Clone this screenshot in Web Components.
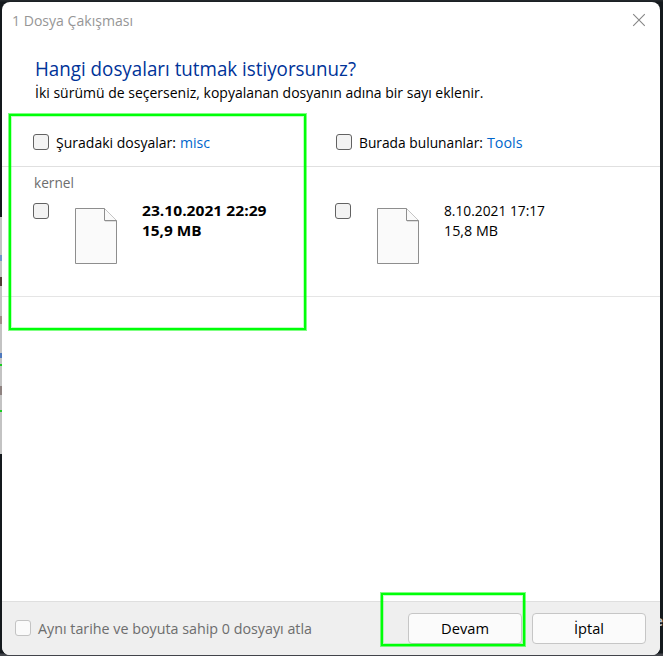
<!DOCTYPE html>
<html lang="tr">
<head>
<meta charset="utf-8">
<title>1 Dosya Çakışması</title>
<style>
html,body{margin:0;height:656px;overflow:hidden;background:#14191d}
body{font:14.8px/20px "Open Sans","Noto Sans",sans-serif;color:#000}
</style>
</head>
<body>
<conflict-dialog></conflict-dialog>
<script>
// One line of text, condensed or widened to a given width and raised by one pixel.
class FitText extends HTMLElement{
  constructor(){super();this.attachShadow({mode:'open'}).innerHTML=`<style>
:host{display:block;white-space:nowrap;flex:none}
span{display:inline-block;transform-origin:0 50%}</style><span><slot></slot></span>`}
  connectedCallback(){
    const w=+this.getAttribute('w'),s=this.shadowRoot.querySelector('span');
    this.style.width=w+'px';
    const n=s.getBoundingClientRect().width;
    if(n)s.style.transform='translateY(-1px) scaleX('+w/n+')';
  }
}
class CheckBox extends HTMLElement{
  constructor(){super();this.attachShadow({mode:'open'}).innerHTML=`<style>
:host{display:block;flex:none;box-sizing:border-box;width:16px;height:16px;border:1px solid #626262;border-radius:3px;background:#f3f3f3}
:host([disabled]){border-color:#c3c3c3;background:#fafafa}</style>`}
}
class FileIcon extends HTMLElement{
  constructor(){super();this.attachShadow({mode:'open'}).innerHTML=`<style>
:host{display:block;flex:none;width:42px;height:56px}svg{display:block}</style>
<svg width="42" height="56" fill="#fafafa" stroke="#8e8e8e"><path d="M.5.5H29.5L41.5 12.5V55.5H.5Z"/><path d="M29.5.5V12.5H41.5"/><path d="M30 13.5H41" stroke="#ddd"/></svg>`}
}
class FileVersion extends HTMLElement{
  constructor(){super();this.attachShadow({mode:'open'}).innerHTML=`<style>
:host{display:flex;align-items:flex-start}
file-icon{margin:5px 25px 0 26px}.info{margin-top:-2px}</style>
<check-box></check-box><file-icon></file-icon><div class="info"><slot></slot></div>`}
}
class PushButton extends HTMLElement{
  constructor(){super();this.attachShadow({mode:'open'}).innerHTML=`<style>
:host{display:flex;box-sizing:border-box;width:114px;height:31px;align-items:center;justify-content:center;border:1px solid #c6c6c6;border-radius:4px;background:#fbfbfb}</style><slot></slot>`}
}
// Bright outline drawn over the dialog around a region.
class HighlightBox extends HTMLElement{
  constructor(){super();this.attachShadow({mode:'open'}).innerHTML=`<style>
:host{position:absolute;box-sizing:border-box;border:2px solid #00ff08;box-shadow:0 0 0 1px #00ff0880,inset 0 0 0 1px #00ff0840;pointer-events:none}</style>`}
}
class ConflictDialog extends HTMLElement{
  constructor(){super();this.attachShadow({mode:'open'}).innerHTML=`<style>
:host{display:block;position:relative;width:663px;height:656px;overflow:hidden;background:linear-gradient(#22272b 0 1px,#14191d 2px 653px,#42444a 654px)}
.behind{position:absolute;left:0;top:217px;width:2px;height:237px;background:
 linear-gradient(#6f94cc,#6f94cc) 0 38px/2px 6px no-repeat,
 linear-gradient(#513d35,#513d35) 0 60px/2px 9px no-repeat,
 linear-gradient(#a08c88,#a08c88) 0 99px/2px 8px no-repeat,
 linear-gradient(#4e79bd,#4e79bd) 0 136px/2px 5px no-repeat,
 linear-gradient(#19cf22,#19cf22) 0 147px/2px 2px no-repeat,
 linear-gradient(#8e8280,#8e8280) 0 169px/2px 9px no-repeat,
 linear-gradient(#19cf22,#19cf22) 0 193px/2px 2px no-repeat,#c3c3c3}
.glyph{position:absolute;right:0;top:610px;color:#b9bec4;font-size:15px;font-weight:700}
.window{position:relative;display:flex;flex-direction:column;box-sizing:border-box;width:658px;height:653px;margin-left:2px;top:2px;border-radius:8px;background:#fff;overflow:hidden}
.bar{display:flex;justify-content:space-between;height:56px;padding:9px 14px 0 10px;box-sizing:border-box;color:#969696}
.close{margin-top:2px}
.intro{height:70px;padding-left:33px}
h1{margin:0;padding-top:1px;font-size:20px;line-height:22px;font-weight:400;color:#003399}
.intro p{margin:2px 0 0}
.cols{display:grid;grid-template-columns:302px 1fr}
.heads{height:39px;padding:6px 0 0 31px;border-bottom:1px solid #e0e0e0;box-sizing:border-box}
.head{display:flex}
.heads .head:last-child{padding-left:1px}
.head check-box{margin:0 7px 0 0}
.head fit-text{margin-top:-1px}
.link{margin-left:4px;color:#0066cc}
.files{height:130px;padding:6px 0 0 31px;border-bottom:1px solid #e5e5e5;box-sizing:border-box}
.name{padding-left:1px;color:#6d6d6d;margin-bottom:10px;height:20px}
.foot{margin-top:auto;height:54px;border-top:1px solid #dfdfdf;background:#efefef;display:flex;align-items:flex-start;padding:11px 14px 0 13px;box-sizing:border-box;color:#6d6d6d}
.foot>check-box{margin:7px 7px 0 0}.foot>fit-text{margin-top:6px}
.actions{display:flex;gap:10px;margin-left:auto;color:#000}
</style>
<div class="behind"></div><div class="glyph">e</div>
<div class="window">
 <div class="bar"><fit-text w="121">1 Dosya Çakışması</fit-text><svg class="close" width="14" height="14" viewBox="0 0 14 14" stroke="#868686" stroke-width="1.1"><path d="M1.2 1.2 12.8 12.8M12.8 1.2 1.2 12.8"/></svg></div>
 <div class="intro"><h1><fit-text w="321">Hangi dosyaları tutmak istiyorsunuz?</fit-text></h1><p><fit-text w="448.5">İki sürümü de seçerseniz, kopyalanan dosyanın adına bir sayı eklenir.</fit-text></p></div>
 <div class="cols heads">
  <div class="head"><check-box></check-box><fit-text w="120">Şuradaki dosyalar:</fit-text><fit-text class="link" w="30">misc</fit-text></div>
  <div class="head"><check-box></check-box><fit-text w="124">Burada bulunanlar:</fit-text><fit-text class="link" w="35.5">Tools</fit-text></div>
 </div>
 <div class="files"><div class="name"><fit-text w="40">kernel</fit-text></div>
  <div class="cols">
   <file-version><b><fit-text w="124.5">23.10.2021 22:29</fit-text><fit-text w="59.5">15,9 MB</fit-text></b></file-version>
   <file-version><fit-text w="101">8.10.2021 17:17</fit-text><fit-text w="54">15,8 MB</fit-text></file-version>
  </div></div>
 <div class="foot"><check-box disabled></check-box><fit-text w="274">Aynı tarihe ve boyuta sahip 0 dosyayı atla</fit-text>
  <div class="actions"><push-button><fit-text w="48">Devam</fit-text></push-button><push-button><fit-text w="30">İptal</fit-text></push-button></div></div>
</div>
<highlight-box style="left:9px;top:114px;width:297px;height:216px"></highlight-box>
<highlight-box style="left:381px;top:593px;width:144px;height:53px"></highlight-box>`}
}
customElements.define('fit-text',FitText);
customElements.define('check-box',CheckBox);
customElements.define('file-icon',FileIcon);
customElements.define('file-version',FileVersion);
customElements.define('push-button',PushButton);
customElements.define('highlight-box',HighlightBox);
customElements.define('conflict-dialog',ConflictDialog);
</script>
</body>
</html>
